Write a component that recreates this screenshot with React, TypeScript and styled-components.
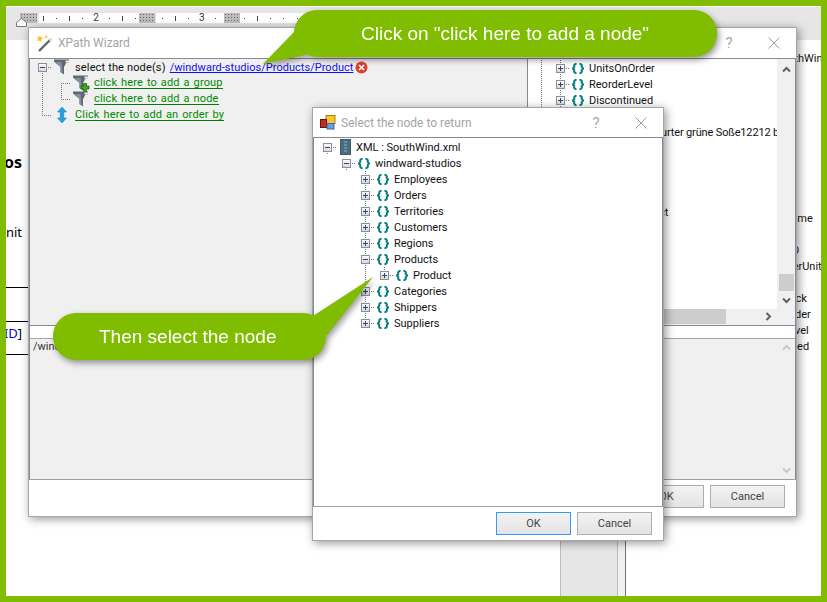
import React from "react";
import styled, { createGlobalStyle, css } from "styled-components";

const GREEN = "#80bc00";
const DOTS = "#70757a";

const GlobalStyle = createGlobalStyle`
  html, body {
    margin: 0;
    padding: 0;
    background: #fff;
  }
  * {
    box-sizing: border-box;
  }
`;

const Root = styled.div`
  position: relative;
  width: 827px;
  height: 602px;
  border: 6px solid ${GREEN};
  overflow: hidden;
  background: #fff;
  font-family: Roboto, "Liberation Sans", sans-serif;
  font-size: 11px;
  color: #111;
`;

/* word processor behind the dialogs */
const TopBand = styled.div`
  height: 34px;
  padding-top: 6px;
  border-top: 1px solid #fff;
  background: #e6e6e6;
`;
const Ruler = styled.div`
  position: relative;
  display: flex;
  height: 10px;
  padding-left: 10px;
`;
const RulerSegment = styled.div<{ $w: number; $pad: number }>`
  display: flex;
  gap: 5.25px;
  width: ${(p) => p.$w}px;
  height: 10px;
  padding-left: ${(p) => p.$pad}px;
  background: #fff;
`;
const RulerBlock = styled.div<{ $w: number }>`
  width: ${(p) => p.$w}px;
  height: 10px;
  flex: none;
  background-color: #bcbcbc;
  background-image: radial-gradient(#666 0.6px, transparent 0.7px);
  background-size: 3px 3px;
`;
const Spacer = styled.div<{ $w: number }>`
  width: ${(p) => p.$w}px;
  flex: none;
`;
const Mark = styled.span`
  display: flex;
  align-items: center;
  justify-content: center;
  width: 8px;
  flex: none;
  font-size: 10px;
  line-height: 10px;
  color: #333;
`;
const Tick = styled.i<{ $tall?: boolean }>`
  display: block;
  width: 1px;
  height: ${(p) => (p.$tall ? 5 : 1)}px;
  background: #444;
`;
const IndentMarker = styled.svg`
  position: absolute;
  left: 10px;
  top: 5px;
`;
const Main = styled.div`
  display: flex;
  height: 556px;
`;
const DocPage = styled.div`
  display: flex;
  flex-direction: column;
  width: 554px;
  flex: none;
`;
const MarginStrip = styled.div`
  display: flex;
  flex-direction: column;
  width: 22px;
`;
const DocText = styled.div<{ $top: number; $bold?: boolean }>`
  display: flex;
  justify-content: flex-end;
  flex: none;
  height: ${(p) => (p.$bold ? 20 : 16)}px;
  margin-top: ${(p) => p.$top}px;
  padding-right: 6px;
  font-family: "Noto Sans", sans-serif;
  font-size: ${(p) => (p.$bold ? 16 : 13)}px;
  font-weight: ${(p) => (p.$bold ? 700 : 400)};
  line-height: ${(p) => (p.$bold ? 20 : 16)}px;
  white-space: nowrap;
  color: #000;
`;
const DocField = styled.span`
  color: #0000e0;
`;
const DocRule = styled.div<{ $top: number }>`
  flex: none;
  height: 1px;
  margin-top: ${(p) => p.$top}px;
  background: #000;
`;
const GrayColumn = styled.div`
  width: 58px;
  flex: none;
  background: #e6e6e6;
  border-left: 1px solid #bdbdbd;
  border-right: 1px solid #bdbdbd;
`;
const ThinColumn = styled.div`
  width: 8px;
  flex: none;
  background: #f0f0f0;
  border-right: 1px solid #6e7180;
`;
const FieldList = styled.div`
  display: flex;
  flex-direction: column;
  flex: 1;
  padding: 11px 0 0 119px;
  overflow: hidden;
  white-space: nowrap;
`;
const FieldRow = styled.div`
  height: 16px;
  line-height: 16px;
  flex: none;
`;

/* windows sit on the desktop at their own coordinates */
const Win = styled.div<{ $x: number; $y: number; $w: number; $h: number }>`
  position: absolute;
  left: ${(p) => p.$x - 6}px;
  top: ${(p) => p.$y - 6}px;
  width: ${(p) => p.$w}px;
  height: ${(p) => p.$h}px;
  display: flex;
  flex-direction: column;
  background: #fff;
  border: 1px solid #a6a6a6;
  box-shadow: 2px 2px 9px rgba(0, 0, 0, 0.42);
`;
const TitleBar = styled.div<{ $h: number; $pad: number }>`
  display: flex;
  align-items: center;
  height: ${(p) => p.$h}px;
  flex: none;
  padding: 0 ${(p) => p.$pad}px 0 7px;
  background: #fff;
`;
const TitleText = styled.div`
  flex: 1;
  margin-left: 5px;
  font-size: 12px;
  color: #a4a4a4;
`;
const HelpMark = styled.span`
  width: 20px;
  margin-right: 29px;
  text-align: center;
  font-size: 15px;
  color: #a8a8a8;
`;
const Client = styled.div`
  display: flex;
  flex-direction: column;
  flex: 1;
  min-height: 0;
  border: 1px solid #878a92;
  border-bottom-color: #a0a0a0;
`;
const SplitTop = styled.div`
  display: flex;
  height: 267px;
  flex: none;
  border-bottom: 1px solid #878a92;
`;
const QueryPane = styled.div`
  width: 498px;
  flex: none;
  padding-left: 3px;
  background: #f0f0f0;
  border-right: 1px solid #878a92;
  letter-spacing: 0.15px;
`;
const SchemaPane = styled.div`
  display: grid;
  grid-template-columns: 1fr 18px;
  grid-template-rows: 1fr 15px;
  flex: 1;
  min-width: 0;
  padding-bottom: 1px;
  background: #f0f0f0;
`;
const SchemaTree = styled.div`
  padding: 1px 0 0 4px;
  background: #fff;
  overflow: hidden;
  white-space: nowrap;
`;
const TightText = styled.span`
  letter-spacing: -0.15px;
`;
const VScroll = styled.div`
  display: flex;
  flex-direction: column;
  align-items: center;
  grid-row: span 2;
  padding-top: 6px;
  background: #f0f0f0;
`;
const VThumb = styled.div`
  width: 15px;
  height: 17px;
  margin: 200px 0 5px;
  background: #cdcdcd;
`;
const HScroll = styled.div`
  display: flex;
  align-items: center;
  justify-content: space-between;
  padding-right: 4px;
  background: #f0f0f0;
`;
const HThumb = styled.div`
  width: 198px;
  height: 15px;
  background: #cdcdcd;
`;
const InputStrip = styled.div`
  height: 13px;
  flex: none;
  background: #fff;
  border-bottom: 1px solid #a6a6a6;
`;
const ResultPane = styled.div`
  display: flex;
  flex: 1;
  min-height: 0;
  background: #f0f0f0;
`;
const ResultText = styled.div`
  flex: 1;
  padding-left: 3px;
  line-height: 16px;
  color: #333;
`;
const ResultScroll = styled.div`
  display: flex;
  flex-direction: column;
  align-items: center;
  justify-content: space-between;
  width: 18px;
  padding: 4px 0;
`;
const Footer = styled.div<{ $h: number; $pad: number }>`
  display: flex;
  align-items: flex-start;
  justify-content: flex-end;
  gap: 6px;
  height: ${(p) => p.$h}px;
  flex: none;
  padding: 5px ${(p) => p.$pad}px 0 0;
  background: #fff;
`;
const Btn = styled.div<{ $focus?: boolean }>`
  display: flex;
  align-items: center;
  justify-content: center;
  width: 75px;
  height: 23px;
  border: 1px solid ${(p) => (p.$focus ? "#3399ff" : "#adadad")};
  background: linear-gradient(#f3f3f3, #e3e3e3);
  color: #444;
`;
const DialogTree = styled.div`
  flex: 1;
  padding: 1px 0 0 4px;
  background: #fff;
`;

/* tree parts */
const Row = styled.div`
  display: flex;
  align-items: center;
  height: 16px;
  white-space: nowrap;
`;

type Trunk = "none" | "full" | "top" | "bottom";

const trunkLayer = (v: Trunk) => {
  if (v === "none") return "";
  const h = v === "full" ? "16px" : "8px";
  const y = v === "bottom" ? "bottom" : "top";
  return css`
    background-image: repeating-linear-gradient(to bottom, ${DOTS} 0 1px, transparent 1px 2px),
      repeating-linear-gradient(to right, ${DOTS} 0 1px, transparent 1px 2px);
    background-size: 1px ${h}, 10px 1px;
    background-position: 9px ${y}, 9px 8px;
    background-repeat: no-repeat;
  `;
};

const Guide = styled.span`
  width: 19px;
  height: 16px;
  flex: none;
  background-image: repeating-linear-gradient(to bottom, ${DOTS} 0 1px, transparent 1px 2px);
  background-size: 1px 16px;
  background-position: 9px 0;
  background-repeat: no-repeat;
`;
const Slot = styled.span<{ $v: Trunk }>`
  display: flex;
  align-items: center;
  width: 19px;
  height: 16px;
  flex: none;
  padding-left: 5px;
  ${(p) => trunkLayer(p.$v)}
`;
const Expander = styled.span<{ $open?: boolean }>`
  position: relative;
  width: 9px;
  height: 9px;
  flex: none;
  border: 1px solid #8b8f97;
  background: linear-gradient(#fbfbfb, #d9d9d9);
  &::before {
    content: "";
    position: absolute;
    left: 1px;
    top: 3px;
    width: 5px;
    height: 1px;
    background: #2c4480;
  }
  ${(p) =>
    !p.$open &&
    css`
      &::after {
        content: "";
        position: absolute;
        left: 3px;
        top: 1px;
        width: 1px;
        height: 5px;
        background: #2c4480;
      }
    `}
`;
const IconBox = styled.span<{ $w: number; $gap: number }>`
  display: flex;
  justify-content: center;
  width: ${(p) => p.$w}px;
  flex: none;
  margin: 0 ${(p) => p.$gap}px 0 2px;
`;
const ActionLink = styled.span`
  display: inline-block;
  line-height: 10px;
  margin-top: 1px;
  border-bottom: 1px solid #008000;
  color: #008a00;
  word-spacing: 1px;
`;
const PathLink = styled.span`
  color: #1010f0;
  text-decoration: underline;
  letter-spacing: 0.03px;
  margin-left: 4px;
  margin-right: 2px;
`;

/* callouts */
const Callout = styled.div<{ $x: number; $y: number; $w: number; $pad: number }>`
  position: absolute;
  left: ${(p) => p.$x - 6}px;
  top: ${(p) => p.$y - 6}px;
  display: flex;
  align-items: center;
  width: ${(p) => p.$w}px;
  height: 47px;
  padding-left: ${(p) => p.$pad}px;
  border-radius: 23px;
  background: ${GREEN};
  color: #fff;
  font-family: "Liberation Sans", Arial, sans-serif;
  font-size: 19px;
  white-space: nowrap;
  filter: drop-shadow(2px 3px 3px rgba(0, 0, 0, 0.4));
`;
const Pointer = styled.svg`
  position: absolute;
  overflow: visible;
`;

const Braces = () => (
  <svg width="12" height="11" viewBox="0 0 12 11" fill="none" stroke="#00807f" strokeWidth="2">
    <path d="M4.6 .8H3.6L2.2 2.2V4L.8 5.5L2.2 7V8.8L3.6 10.2H4.6" />
    <path d="M7.4 .8H8.4L9.8 2.2V4L11.2 5.5L9.8 7V8.8L8.4 10.2H7.4" />
  </svg>
);

const Funnel: React.FC<{ plus?: boolean }> = ({ plus }) => (
  <svg width="16" height="16" viewBox="0 0 16 16" style={{ overflow: "visible" }}>
    <path d="M0 .5H15V3.5H12.5L10 8V15.5L6.5 13V8L0 2.5Z" fill="#5f6973" />
    <path d="M6.5 8L2 3H7.5L8.5 13.8L6.5 13Z" fill="#88929c" />
    <path d="M11.5 1.5H15V3.5H11.5Z" fill="#e8eaec" />
    {plus && <path d="M8 11H10.5V8.5H13.5V11H16V14H13.5V16.5H10.5V14H8Z" fill="#3fa51d" stroke="#14540a" strokeWidth=".7" />}
  </svg>
);

const SortArrows = () => (
  <svg width="10" height="16" viewBox="0 0 10 16">
    <path d="M5 0L9.5 5H6.8V11H9.5L5 16L.5 11H3.2V5H.5Z" fill="#2a9fe0" stroke="#0f78c0" strokeWidth=".5" />
  </svg>
);

const ServerIcon = () => (
  <svg width="11" height="16" viewBox="0 0 11 16">
    <rect width="11" height="16" fill="#405a69" />
    <rect x="1" y="1" width="9" height="14" fill="#4d6b78" />
    <path d="M4 3H7M4 6H7M4 9H7M4 12H7" stroke="#58c6ea" strokeWidth="1" />
  </svg>
);

const ErrorDot = () => (
  <svg width="13" height="13" viewBox="0 0 13 13" style={{ flex: "none" }}>
    <circle cx="6.5" cy="6.5" r="6" fill="#e2402f" />
    <path d="M4 4L9 9M9 4L4 9" stroke="#fff" strokeWidth="1.6" />
  </svg>
);

const WandIcon = () => (
  <svg width="17" height="17" viewBox="0 0 17 17" style={{ flex: "none" }}>
    <path d="M3 16L15 4" stroke="#5c6470" strokeWidth="2.4" />
    <path d="M13.5 5.5L15 4" stroke="#dfe3e8" strokeWidth="2.4" />
    <path d="M4 0L5 2.5L7.6 3L5.3 4.5L5.5 7L3.6 5.4L1 6L2.2 3.6L1 1.5L3.3 2Z" fill="#f5c518" />
    <path d="M10 0L10.7 1.3L12 1.6L10.8 2.4L10.6 3.6L9.7 2.6L8.3 2.8L9.2 1.6Z" fill="#f5c518" />
  </svg>
);

const BlocksIcon = () => (
  <svg width="16" height="15" viewBox="0 0 16 15" style={{ flex: "none" }}>
    <rect x="6" y=".5" width="9" height="8" fill="#f7c62f" stroke="#a5801a" />
    <rect x=".5" y="4.5" width="6" height="8" fill="#c8281e" stroke="#5a1a16" />
    <rect x="7" y="8.5" width="7" height="5.5" fill="#6d9be0" stroke="#41659e" />
  </svg>
);

const CloseX = () => (
  <svg width="12" height="12" viewBox="0 0 12 12" stroke="#9a9a9a" fill="none" style={{ flex: "none" }}>
    <path d="M.5 .5L11.5 11.5M11.5 .5L.5 11.5" />
  </svg>
);

const Chevron: React.FC<{ dir: "up" | "down" | "right"; faint?: boolean }> = ({ dir, faint }) => (
  <svg width="9" height="9" viewBox="0 0 9 9" fill="none" stroke={faint ? "#c8c8c8" : "#606060"} strokeWidth="2" style={{ flex: "none" }}>
    {dir === "up" && <path d="M1 6.5L4.5 3L8 6.5" />}
    {dir === "down" && <path d="M1 2.5L4.5 6L8 2.5" />}
    {dir === "right" && <path d="M2.5 1L6 4.5L2.5 8" />}
  </svg>
);

interface NodeProps {
  level: number;
  label: string;
  open?: boolean;
  trunks?: boolean[];
  v?: Trunk;
}

const XmlNode: React.FC<NodeProps> = ({ level, label, open, trunks = [], v = "full" }) => (
  <Row>
    {Array.from({ length: level }).map((_, i) =>
      trunks[i] ? <Guide key={i} /> : <Spacer key={i} $w={19} />
    )}
    <Slot $v={v}>
      <Expander $open={open} />
    </Slot>
    <IconBox $w={12} $gap={5}>
      <Braces />
    </IconBox>
    {label}
  </Row>
);

const rootChildren = ["Employees", "Orders", "Territories", "Customers", "Regions"];
const afterProducts = ["Categories", "Shippers", "Suppliers"];
const productFields = [
  "ProductName",
  "SupplierID",
  "CategoryID",
  "QuantityPerUnit",
  "UnitPrice",
  "UnitsInStock",
  "UnitsOnOrder",
  "ReorderLevel",
  "Discontinued",
];

export default function App() {
  return (
    <Root>
      <GlobalStyle />
      <TopBand>
        <Ruler>
          <Spacer $w={4} />
          <RulerBlock $w={17} />
          <Spacer $w={2} />
          <RulerSegment $w={100} $pad={0}>
            <Mark><Tick $tall /></Mark>
            <Mark><Tick /></Mark>
            <Mark><Tick $tall /></Mark>
            <Mark><Tick /></Mark>
            <Mark>2</Mark>
            <Mark><Tick /></Mark>
            <Mark><Tick $tall /></Mark>
            <Mark><Tick /></Mark>
          </RulerSegment>
          <RulerBlock $w={16} />
          <Spacer $w={1} />
          <RulerSegment $w={68} $pad={2}>
            <Mark><Tick /></Mark>
            <Mark><Tick $tall /></Mark>
            <Mark><Tick /></Mark>
            <Mark>3</Mark>
            <Mark><Tick /></Mark>
          </RulerSegment>
          <RulerBlock $w={16} />
          <RulerSegment $w={70} $pad={0}>
            <Mark><Tick /></Mark>
            <Mark><Tick $tall /></Mark>
            <Mark><Tick /></Mark>
            <Mark><Tick /></Mark>
            <Mark><Tick /></Mark>
          </RulerSegment>
          <IndentMarker width="11" height="9" viewBox="0 0 11 9">
            <path d="M5.5 .5L10.5 4.5V8.5H.5V4.5Z" fill="#fff" stroke="#777" />
          </IndentMarker>
        </Ruler>
      </TopBand>
      <Main>
        <DocPage>
          <MarginStrip>
            <DocText $top={112} $bold>os</DocText>
            <DocText $top={52}>nit</DocText>
            <DocRule $top={47} />
            <DocRule $top={33} />
            <DocText $top={3}><DocField>ID</DocField>]</DocText>
            <DocRule $top={13} />
          </MarginStrip>
        </DocPage>
        <GrayColumn />
        <ThinColumn />
        <FieldList>
          <FieldRow>XML : SouthWind.xml</FieldRow>
          {Array.from({ length: 9 }).map((_, i) => (
            <FieldRow key={i} />
          ))}
          {productFields.map((name) => (
            <FieldRow key={name}>{name}</FieldRow>
          ))}
        </FieldList>
      </Main>

      <Win $x={28} $y={27} $w={769} $h={490}>
        <TitleBar $h={30} $pad={16}>
          <WandIcon />
          <TitleText>XPath Wizard</TitleText>
          <HelpMark>?</HelpMark>
          <CloseX />
        </TitleBar>
        <Client>
          <SplitTop>
            <QueryPane>
              <Row>
                <Slot $v="bottom">
                  <Expander $open />
                </Slot>
                <IconBox $w={15} $gap={6}>
                  <Funnel />
                </IconBox>
                select the node(s)
                <PathLink>/windward-studios/Products/Product</PathLink>
                <ErrorDot />
              </Row>
              <Row>
                <Guide />
                <Slot $v="bottom" />
                <IconBox $w={15} $gap={6}>
                  <Funnel plus />
                </IconBox>
                <ActionLink>click here to add a group</ActionLink>
              </Row>
              <Row>
                <Guide />
                <Slot $v="top" />
                <IconBox $w={15} $gap={6}>
                  <Funnel />
                </IconBox>
                <ActionLink>click here to add a node</ActionLink>
              </Row>
              <Row>
                <Slot $v="top" />
                <IconBox $w={15} $gap={6}>
                  <SortArrows />
                </IconBox>
                <ActionLink>Click here to add an order by</ActionLink>
              </Row>
            </QueryPane>
            <SchemaPane>
              <SchemaTree>
                <XmlNode level={1} trunks={[true]} label="UnitsOnOrder" />
                <XmlNode level={1} trunks={[true]} label="ReorderLevel" />
                <XmlNode level={1} trunks={[true]} label="Discontinued" />
                <Row />
                <Row>
                  <Spacer $w={99} />
                  <TightText>Frankfurter grüne Soße12212 b</TightText>
                </Row>
                <Row />
                <Row />
                <Row />
                <Row />
                <Row>
                  <Spacer $w={98} />
                  Product
                </Row>
              </SchemaTree>
              <VScroll>
                <Chevron dir="up" />
                <VThumb />
                <Chevron dir="down" />
              </VScroll>
              <HScroll>
                <HThumb />
                <Chevron dir="right" />
              </HScroll>
            </SchemaPane>
          </SplitTop>
          <InputStrip />
          <ResultPane>
            <ResultText>/wind</ResultText>
            <ResultScroll>
              <Chevron dir="up" faint />
              <Chevron dir="down" faint />
            </ResultScroll>
          </ResultPane>
        </Client>
        <Footer $h={36} $pad={11}>
          <Btn>OK</Btn>
          <Btn>Cancel</Btn>
        </Footer>
      </Win>

      <Win $x={312} $y={107} $w={352} $h={434}>
        <TitleBar $h={29} $pad={16}>
          <BlocksIcon />
          <TitleText>Select the node to return</TitleText>
          <HelpMark>?</HelpMark>
          <CloseX />
        </TitleBar>
        <Client>
          <DialogTree>
            <Row>
              <Slot $v="bottom">
                <Expander $open />
              </Slot>
              <IconBox $w={12} $gap={5}>
                <ServerIcon />
              </IconBox>
              XML : SouthWind.xml
            </Row>
            <XmlNode level={1} open v="bottom" trunks={[false]} label="windward-studios" />
            {rootChildren.map((name) => (
              <XmlNode key={name} level={2} trunks={[false, false]} label={name} />
            ))}
            <XmlNode level={2} open trunks={[false, false]} label="Products" />
            <XmlNode level={3} trunks={[false, false, true]} v="top" label="Product" />
            {afterProducts.map((name, i) => (
              <XmlNode key={name} level={2} trunks={[false, false]} v={i === 2 ? "top" : "full"} label={name} />
            ))}
          </DialogTree>
        </Client>
        <Footer $h={33} $pad={11}>
          <Btn $focus>OK</Btn>
          <Btn>Cancel</Btn>
        </Footer>
      </Win>

      <Callout $x={294} $y={10} $w={423} $pad={67}>
        <Pointer width="60" height="36" viewBox="0 0 60 36" style={{ left: -34, top: 20 }}>
          <path d="M3 34L36 0H60L45 25Z" fill={GREEN} />
        </Pointer>
        Click on "click here to add a node"
      </Callout>
      <Callout $x={53} $y={313} $w={273} $pad={46}>
        <Pointer width="85" height="65" viewBox="0 0 85 65" style={{ left: 237, top: -38 }}>
          <path d="M83 2L23 41L10 55L37 60Z" fill={GREEN} />
        </Pointer>
        Then select the node
      </Callout>
    </Root>
  );
}
